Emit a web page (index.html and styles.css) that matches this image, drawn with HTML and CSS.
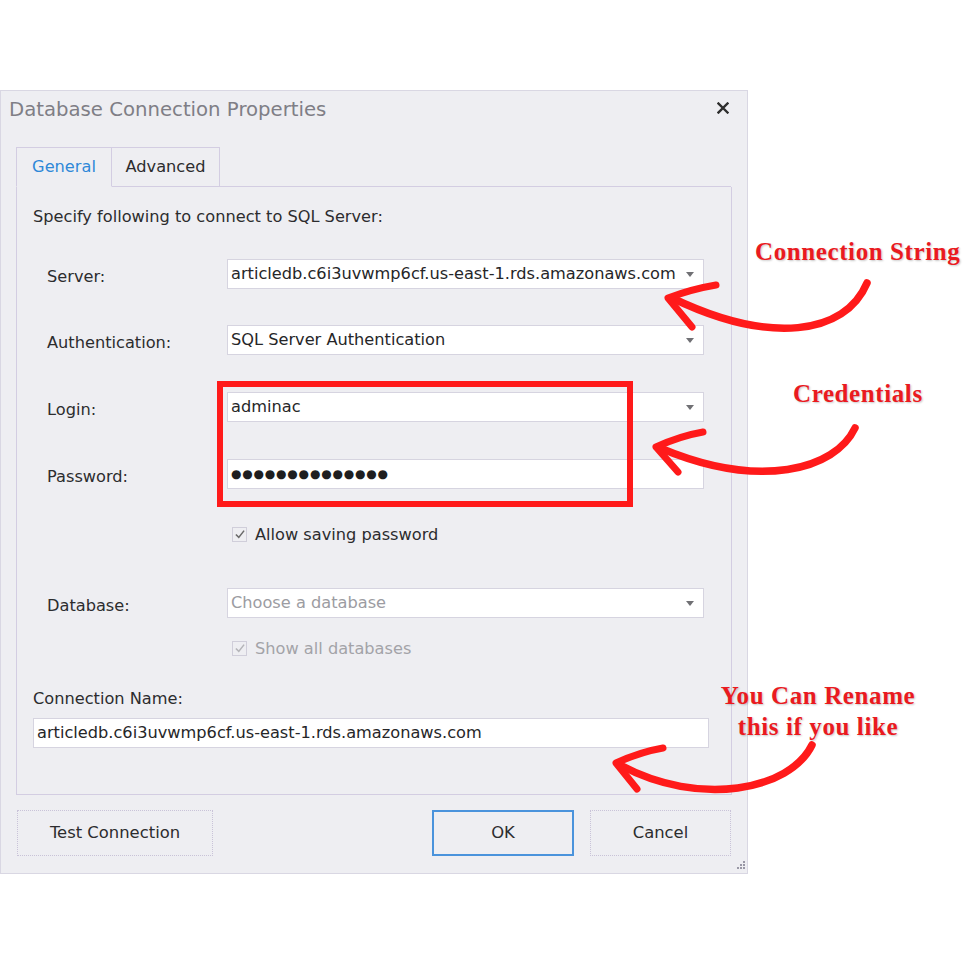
FILE: index.html
```html
<!DOCTYPE html>
<html lang="en">
<head>
<meta charset="utf-8">
<title>Database Connection Properties</title>
<link rel="stylesheet" href="styles.css">
</head>
<body>
<div class="page">
  <section class="dialog">
    <header class="titlebar">
      <h1 class="title">Database Connection Properties</h1>
      <svg class="close" viewBox="0 0 12 12" width="12" height="12"><path d="M1.5 1.5 L10.5 10.5 M10.5 1.5 L1.5 10.5" stroke="#2e2e2e" stroke-width="2.4" stroke-linecap="square"/></svg>
    </header>

    <div class="tabs">
      <div class="tab tab-active">General</div>
      <div class="tab">Advanced</div>
      <div class="tab-fill"></div>
    </div>

    <div class="panel">
      <p class="intro">Specify following to connect to SQL Server:</p>

      <div class="row row-first">
        <span class="label">Server:</span>
        <div class="field combo"><span class="value">articledb.c6i3uvwmp6cf.us-east-1.rds.amazonaws.com</span><span class="arrow"></span></div>
      </div>
      <div class="row row-gap36">
        <span class="label">Authentication:</span>
        <div class="field combo"><span class="value">SQL Server Authentication</span><span class="arrow"></span></div>
      </div>
      <div class="row row-gap37">
        <span class="label">Login:</span>
        <div class="field combo"><span class="value">adminac</span><span class="arrow"></span></div>
      </div>
      <div class="row row-gap37">
        <span class="label">Password:</span>
        <div class="field"><span class="value dots">●●●●●●●●●●●●●●</span></div>
      </div>
      <div class="check-row check-save">
        <span class="box"><svg viewBox="0 0 14 14" width="14" height="14"><path d="M3 7.5 L6 10.5 L11.5 3.5" fill="none" stroke="#6a6a6a" stroke-width="1.6"/></svg></span>
        <span class="check-text">Allow saving password</span>
      </div>
      <div class="row row-gap44">
        <span class="label">Database:</span>
        <div class="field combo"><span class="value placeholder">Choose a database</span><span class="arrow"></span></div>
      </div>
      <div class="check-row check-show disabled">
        <span class="box"><svg viewBox="0 0 14 14" width="14" height="14"><path d="M3 7.5 L6 10.5 L11.5 3.5" fill="none" stroke="#b4b4b8" stroke-width="1.6"/></svg></span>
        <span class="check-text">Show all databases</span>
      </div>

      <div class="conn-label">Connection Name:</div>
      <div class="field conn-field"><span class="value">articledb.c6i3uvwmp6cf.us-east-1.rds.amazonaws.com</span></div>
    </div>

    <footer class="buttons">
      <button class="btn btn-test">Test Connection</button>
      <span class="spacer"></span>
      <button class="btn btn-ok">OK</button>
      <button class="btn btn-cancel">Cancel</button>
    </footer>
    <svg class="grip" viewBox="0 0 8 8" width="8" height="8">
      <g fill="#9a98a6"><rect x="6" y="0" width="2" height="2"/><rect x="3" y="3" width="2" height="2"/><rect x="6" y="3" width="2" height="2"/><rect x="0" y="6" width="2" height="2"/><rect x="3" y="6" width="2" height="2"/><rect x="6" y="6" width="2" height="2"/></g>
    </svg>
  </section>

  <svg class="marks" viewBox="0 0 967 967" width="967" height="967">
    <g fill="none" stroke="#ff1a1a" stroke-linecap="round" stroke-linejoin="round">
      <rect x="220" y="384" width="410" height="120" stroke-width="6" stroke-linecap="butt" stroke-linejoin="miter"/>
      <path d="M867 283 C845 335 770 345 672 298" stroke-width="7.5"/>
      <path d="M716 285 Q692 289 668 298 L692 327" stroke-width="7"/>
      <path d="M855 428 C835 470 760 490 660 448" stroke-width="7.5"/>
      <path d="M703 432 Q680 436 656 447 L678 472" stroke-width="7"/>
      <path d="M812 745 C790 790 700 808 620 765" stroke-width="7.5"/>
      <path d="M663 748 Q640 752 616 763 L637 789" stroke-width="7"/>
    </g>
  </svg>

  <div class="note note-conn">Connection String</div>
  <div class="note note-cred">Credentials</div>
  <div class="note note-rename">You Can Rename<br>this if you like</div>
</div>
</body>
</html>
```

FILE: styles.css
```css
* { box-sizing: border-box; }
html, body { margin: 0; padding: 0; background: #ffffff; }
body { width: 967px; height: 967px; overflow: hidden; }

.page {
  position: relative;
  width: 967px;
  height: 967px;
  padding-top: 90px;
  font-family: "DejaVu Sans", Verdana, sans-serif;
  font-size: 16.2px;
  color: #2c2c2e;
}

.dialog {
  position: relative;
  width: 748px;
  height: 784px;
  background: #eeeef2;
  border: 1px solid #d9d7e3;
  padding: 0 16px 0 15px;
  display: flex;
  flex-direction: column;
}

.titlebar {
  height: 36px;
  display: flex;
  align-items: center;
  justify-content: space-between;
  margin-left: -7px;
  padding-right: 2px;
}
.title {
  margin: 0;
  font-weight: normal;
  font-size: 19.7px;
  color: #7f7e86;
}
.close { display: block; margin-top: -2px; }

.tabs {
  margin-top: 20px;
  display: flex;
  height: 40px;
}
.tab {
  height: 40px;
  border: 1px solid #d3cde2;
  display: flex;
  align-items: center;
  justify-content: center;
  color: #2c2c2e;
  padding-bottom: 2px;
}
.tab-active {
  width: 96px;
  color: #2f88d8;
  border-bottom-color: transparent;
}
.tab-active + .tab {
  width: 108px;
  border-left: 0;
}
.tab-fill {
  flex: 1;
  border-bottom: 1px solid #d3cde2;
}

.panel {
  width: 716px;
  border: 1px solid #d3cde2;
  border-top: 0;
  padding: 20px 16px 46px 16px;
  display: flex;
  flex-direction: column;
}
.intro {
  margin: 0;
  height: 20px;
  line-height: 20px;
}

.row {
  display: grid;
  grid-template-columns: 180px 477px;
  align-items: center;
  height: 30px;
  margin-left: 14px;
}
.row-first { margin-top: 32px; }
.row-gap36 { margin-top: 36px; }
.row-gap37 { margin-top: 37px; }
.row-gap44 { margin-top: 44px; }
.label { line-height: 20px; padding-top: 6px; }

.field {
  position: relative;
  height: 30px;
  background: #ffffff;
  border: 1px solid #d6d4e0;
  display: flex;
  align-items: center;
  padding-left: 3px;
  color: #262628;
  white-space: nowrap;
  overflow: hidden;
}
.value { line-height: 20px; }
.placeholder { color: #9c9ca2; }
.dots { font-size: 12px; letter-spacing: 0.8px; color: #1e1e20; }
.arrow {
  position: absolute;
  right: 9px;
  top: 12px;
  width: 0;
  height: 0;
  border-left: 4.5px solid transparent;
  border-right: 4.5px solid transparent;
  border-top: 5px solid #707074;
}

.check-row {
  display: flex;
  align-items: center;
  height: 20px;
  margin-left: 199px;
  gap: 8px;
}
.check-save { margin-top: 35px; }
.check-show { margin-top: 20px; }
.box {
  width: 15px;
  height: 15px;
  border: 1px solid #d0ceda;
  background: #eeeef2;
  display: flex;
}
.box svg { display: block; margin: -1px 0 0 -0.5px; }
.check-text { padding-top: 1px; }
.disabled .check-text { color: #a3a3a8; }

.conn-label {
  margin-top: 31px;
  height: 20px;
  line-height: 20px;
}
.conn-field {
  margin-top: 9px;
  width: 676px;
}

.buttons {
  margin-top: 15px;
  display: flex;
  gap: 16px;
  padding-left: 1px;
}
.spacer { flex: 1; }
.btn {
  height: 46px;
  font-family: "DejaVu Sans", Verdana, sans-serif;
  font-size: 16.4px;
  color: #2c2c2e;
  background: #eeeef2;
  border: 1px dotted #c9c3d8;
  padding: 0 0 2px 0;
}
.btn-test { width: 196px; }
.btn-ok { width: 142px; border: 2px solid #4a93dc; }
.btn-cancel { width: 141px; }

.grip {
  position: absolute;
  right: 2px;
  bottom: 4px;
}

.marks {
  position: absolute;
  left: 0;
  top: 0;
  pointer-events: none;
}

.note {
  position: absolute;
  font-family: "Liberation Serif", "Times New Roman", serif;
  font-weight: bold;
  font-size: 25px;
  line-height: 31px;
  color: #ea1a1f;
  text-shadow: 1px 1px 2px rgba(0, 0, 0, 0.22);
  white-space: nowrap;
  letter-spacing: 0.6px;
}
.note-conn { left: 755px; top: 236px; }
.note-cred { left: 793px; top: 378px; }
.note-rename { left: 718px; top: 680px; text-align: center; width: 200px; }
```
